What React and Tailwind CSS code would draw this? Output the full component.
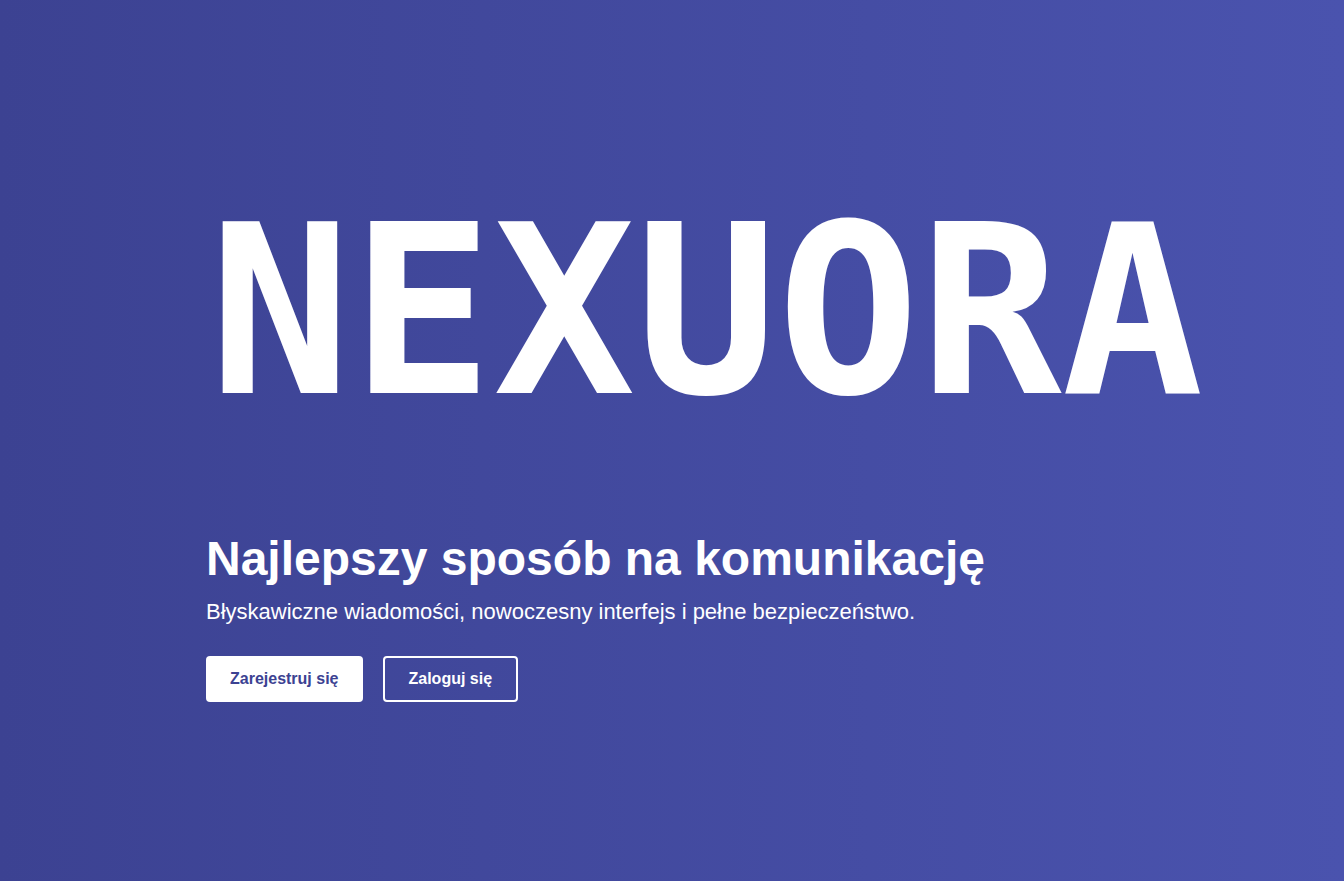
export default function App() {
    return (
        <div className="w-full h-screen overflow-hidden bg-linear-to-r from-[#3c4292] to-[#4a53ae] text-white" style={{ fontFamily: '"Liberation Sans", Arial, sans-serif' }}>
            <div className="flex flex-col items-start pl-[206px]">
                <h1
                    className="mt-[194px] ml-[3px] text-[236px] leading-none font-bold whitespace-nowrap"
                    style={{ fontFamily: '"DejaVu Sans Mono", monospace' }}
                >
                    NEXUORA
                </h1>
                <h2 className="mt-[105px] text-[48px] leading-none font-bold">Najlepszy sposób na komunikację</h2>
                <p className="mt-[14px] text-[22px] leading-snug">
                    Błyskawiczne wiadomości, nowoczesny interfejs i pełne bezpieczeństwo.
                </p>
                <div className="mt-[29px] flex gap-5">
                    <button className="h-[46px] px-6 rounded bg-white text-[#3c4292] text-[16px] font-bold">
                        Zarejestruj się
                    </button>
                    <button className="h-[46px] px-6 rounded border-2 border-white text-white text-[16px] font-bold">
                        Zaloguj się
                    </button>
                </div>
            </div>
        </div>
    );
}
